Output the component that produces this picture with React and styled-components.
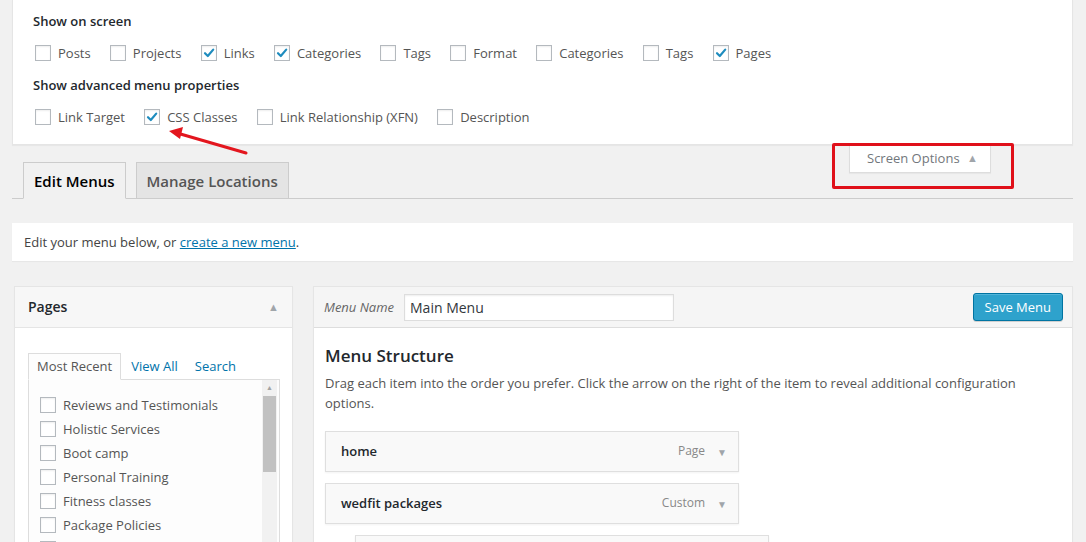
import styled, { createGlobalStyle } from "styled-components";

const GlobalStyle = createGlobalStyle`
  html, body {
    margin: 0;
    padding: 0;
    background: #f1f1f1;
  }
  body {
    font-family: "Open Sans", "Liberation Sans", sans-serif;
    font-size: 13px;
    line-height: 1.4;
    color: #444;
    overflow: hidden;
  }
  * {
    box-sizing: border-box;
  }
`;

const screenTypes = [
  { label: "Posts", checked: false },
  { label: "Projects", checked: false },
  { label: "Links", checked: true },
  { label: "Categories", checked: true },
  { label: "Tags", checked: false },
  { label: "Format", checked: false },
  { label: "Categories", checked: false },
  { label: "Tags", checked: false },
  { label: "Pages", checked: true },
];

const advanced = [
  { label: "Link Target", checked: false },
  { label: "CSS Classes", checked: true },
  { label: "Link Relationship (XFN)", checked: false },
  { label: "Description", checked: false },
];

// the last one is cut off by the bottom of the window, only its box shows
const pages = [
  "Reviews and Testimonials",
  "Holistic Services",
  "Boot camp",
  "Personal Training",
  "Fitness classes",
  "Package Policies",
  "",
];

const menuItems = [
  { title: "home", type: "Page", depth: 0 },
  { title: "wedfit packages", type: "Custom", depth: 0 },
  { title: "", type: "", depth: 1 },
];

function Checkbox({ checked }) {
  return (
    <Box>
      {checked && (
        <svg width="12" height="12" viewBox="0 0 12 12">
          <path
            d="M2 6.2 L4.8 9 L10.2 2.6"
            fill="none"
            stroke="#1e8cbe"
            strokeWidth="2.2"
            strokeLinecap="round"
            strokeLinejoin="round"
          />
        </svg>
      )}
    </Box>
  );
}

function App() {
  return (
    <>
      <GlobalStyle />
      <Page>
        <ScreenMeta>
          <Legend>Show on screen</Legend>
          <OptionRow>
            {screenTypes.map((o, i) => (
              <Option key={i}>
                <Checkbox checked={o.checked} />
                {o.label}
              </Option>
            ))}
          </OptionRow>
          <Legend>Show advanced menu properties</Legend>
          <OptionRow>
            {advanced.map((o, i) => (
              <Option key={i}>
                <Checkbox checked={o.checked} />
                {o.label}
              </Option>
            ))}
          </OptionRow>
          <Arrow width="90" height="34" viewBox="0 0 90 34">
            <line x1="83" y1="28" x2="14" y2="8" stroke="#e3161e" strokeWidth="3" strokeLinecap="round" />
            <polygon points="6,6 20,2 17,14" fill="#e3161e" />
          </Arrow>
        </ScreenMeta>

        <TabBar>
          <Tab $active>Edit Menus</Tab>
          <Tab>Manage Locations</Tab>
          <Spacer />
          <ScreenOptionsWrap>
            <ScreenOptions>
              Screen Options <Caret>▲</Caret>
            </ScreenOptions>
            <Highlight />
          </ScreenOptionsWrap>
        </TabBar>

        <Notice>
          Edit your menu below, or <Link href="#">create a new menu</Link>.
        </Notice>

        <Columns>
          <SidePanel>
            <PanelHead>
              <PanelTitle>Pages</PanelTitle>
              <Caret>▲</Caret>
            </PanelHead>
            <SideBody>
              <InnerTabs>
                <InnerTab $active>Most Recent</InnerTab>
                <InnerTab>View All</InnerTab>
                <InnerTab>Search</InnerTab>
              </InnerTabs>
              <ListBox>
                <PageList>
                  {pages.map((p, i) => (
                    <PageItem key={i}>
                      <Checkbox />
                      {p}
                    </PageItem>
                  ))}
                </PageList>
                <Scrollbar>
                  <ScrollArrow>▲</ScrollArrow>
                  <Thumb />
                </Scrollbar>
              </ListBox>
            </SideBody>
          </SidePanel>

          <MenuPanel>
            <MenuHead>
              <NameLabel>Menu Name</NameLabel>
              <NameInput defaultValue="Main Menu" />
              <Spacer />
              <SaveButton>Save Menu</SaveButton>
            </MenuHead>
            <MenuBody>
              <Heading>Menu Structure</Heading>
              <Description>
                Drag each item into the order you prefer. Click the arrow on the right of the item
                to reveal additional configuration options.
              </Description>
              <ItemList>
                {menuItems.map((m, i) => (
                  <MenuItem key={i} $depth={m.depth}>
                    <ItemTitle>{m.title}</ItemTitle>
                    {m.type && (
                      <>
                        <ItemType>{m.type}</ItemType>
                        <ItemCaret>▼</ItemCaret>
                      </>
                    )}
                  </MenuItem>
                ))}
              </ItemList>
            </MenuBody>
          </MenuPanel>
        </Columns>
      </Page>
    </>
  );
}

export default App;

const Page = styled.div`
  padding: 0 13px 0 12px;
  height: 542px;
`;

const ScreenMeta = styled.div`
  position: relative;
  background: #fff;
  border: 1px solid #e5e5e5;
  border-top: none;
  box-shadow: 0 1px 1px rgba(0, 0, 0, 0.04);
  padding: 12px 20px 18px 20px;
  display: flex;
  flex-direction: column;
  gap: 14px;
`;

const Legend = styled.div`
  font-weight: 600;
  color: #23282d;
  line-height: 18px;
`;

const OptionRow = styled.div`
  display: flex;
  height: 18px;
  align-items: center;
  padding-left: 2px;
`;

const Option = styled.label`
  display: flex;
  align-items: center;
  margin-right: 19.2px;
  color: #555;
  white-space: nowrap;
`;

const Box = styled.span`
  width: 16px;
  height: 16px;
  margin-right: 7px;
  border: 1px solid #b4b9be;
  background: #fff;
  box-shadow: inset 0 1px 2px rgba(0, 0, 0, 0.07);
  display: inline-flex;
  align-items: center;
  justify-content: center;
  flex-shrink: 0;
`;

const Arrow = styled.svg`
  position: absolute;
  left: 150px;
  top: 125px;
  z-index: 3;
  overflow: visible;
`;

const TabBar = styled.div`
  display: flex;
  align-items: flex-end;
  height: 54px;
  border-bottom: 1px solid #ccc;
  padding-left: 11px;
`;

const Tab = styled.div`
  margin-right: 10px;
  margin-bottom: -1px;
  padding: 5px 10px 5px 10px;
  height: 37px;
  font-size: 15px;
  line-height: 26px;
  font-weight: 600;
  border: 1px solid #ccc;
  border-bottom-color: ${(p) => (p.$active ? "#f1f1f1" : "#ccc")};
  background: ${(p) => (p.$active ? "#f1f1f1" : "#e4e4e4")};
  color: ${(p) => (p.$active ? "#000" : "#555")};
`;

const Spacer = styled.div`
  flex: 1;
`;

const ScreenOptionsWrap = styled.div`
  position: relative;
  align-self: flex-start;
  margin-right: 82px;
`;

const ScreenOptions = styled.div`
  width: 142px;
  height: 28px;
  background: #fff;
  border: 1px solid #ddd;
  border-top: none;
  box-shadow: 0 1px 1px rgba(0, 0, 0, 0.04);
  color: #72777c;
  line-height: 26px;
  padding-left: 17px;
`;

const Caret = styled.span`
  font-size: 11px;
  color: #a0a5aa;
  margin-left: 4px;
  vertical-align: 1px;
`;

const Highlight = styled.div`
  position: absolute;
  left: -17px;
  top: -2px;
  width: 182px;
  height: 46px;
  border: 3px solid #e0101a;
  border-radius: 2px;
  pointer-events: none;
`;

const Notice = styled.div`
  margin-top: 24px;
  background: #fff;
  height: 38px;
  line-height: 38px;
  padding: 0 12px;
  box-shadow: 0 1px 1px rgba(0, 0, 0, 0.04);
  color: #444;
`;

const Link = styled.a`
  color: #0073aa;
  text-decoration: underline;
`;

const Columns = styled.div`
  margin-top: 25px;
  display: flex;
  align-items: flex-start;
  gap: 20px;
  padding-left: 2px;
`;

const SidePanel = styled.div`
  width: 279px;
  flex-shrink: 0;
  background: #fff;
  border: 1px solid #e5e5e5;
  box-shadow: 0 1px 1px rgba(0, 0, 0, 0.04);
`;

const PanelHead = styled.div`
  display: flex;
  align-items: center;
  justify-content: space-between;
  height: 41px;
  padding: 0 13px 0 13px;
  background: #f7f7f7;
  border-bottom: 1px solid #e5e5e5;
`;

const PanelTitle = styled.div`
  font-size: 14px;
  font-weight: 600;
  color: #23282d;
`;

const SideBody = styled.div`
  padding: 25px 12px 0 13px;
`;

const InnerTabs = styled.div`
  display: flex;
  align-items: flex-end;
`;

const InnerTab = styled.div`
  height: 27px;
  line-height: 24px;
  padding: ${(p) => (p.$active ? "0 8px" : "0")};
  margin-right: ${(p) => (p.$active ? "9px" : "15px")};
  margin-bottom: -1px;
  position: relative;
  color: ${(p) => (p.$active ? "#555" : "#0073aa")};
  background: ${(p) => (p.$active ? "#fdfdfd" : "transparent")};
  border: 1px solid ${(p) => (p.$active ? "#ddd" : "transparent")};
  border-bottom-color: ${(p) => (p.$active ? "#fdfdfd" : "transparent")};
  z-index: 1;
`;

const ListBox = styled.div`
  display: flex;
  height: 200px;
  background: #fdfdfd;
  border: 1px solid #ddd;
  overflow: hidden;
`;

const PageList = styled.div`
  flex: 1;
  padding: 13px 11px 0 11px;
`;

const PageItem = styled.div`
  display: flex;
  align-items: center;
  height: 24px;
  color: #555;
  white-space: nowrap;
`;

const Scrollbar = styled.div`
  width: 15px;
  margin-right: 2px;
  background: #f1f1f1;
  display: flex;
  flex-direction: column;
  align-items: stretch;
`;

const ScrollArrow = styled.div`
  height: 16px;
  font-size: 7px;
  line-height: 16px;
  text-align: center;
  color: #a3a3a3;
`;

const Thumb = styled.div`
  height: 76px;
  background: #c1c1c1;
  margin: 0 1px;
`;

const MenuPanel = styled.div`
  flex: 1;
  background: #fff;
  border: 1px solid #e5e5e5;
  box-shadow: 0 1px 1px rgba(0, 0, 0, 0.04);
  height: 400px;
`;

const MenuHead = styled.div`
  display: flex;
  align-items: center;
  height: 41px;
  padding: 0 9px 0 10px;
  background: #f5f5f5;
  border-bottom: 1px solid #ddd;
`;

const NameLabel = styled.span`
  font-style: italic;
  color: #666;
  margin-right: 10px;
`;

const NameInput = styled.input`
  width: 270px;
  height: 27px;
  border: 1px solid #ddd;
  box-shadow: inset 0 1px 2px rgba(0, 0, 0, 0.07);
  background: #fff;
  font-family: "Open Sans", "Liberation Sans", sans-serif;
  font-size: 14px;
  color: #32373c;
  padding: 0 5px;
  outline: none;
`;

const SaveButton = styled.button`
  height: 28px;
  padding: 0 11px;
  background: #2ea2cc;
  border: 1px solid #0074a2;
  border-radius: 3px;
  box-shadow: inset 0 1px 0 rgba(120, 200, 230, 0.5), 0 1px 0 rgba(0, 0, 0, 0.15);
  color: #fff;
  font-family: "Open Sans", "Liberation Sans", sans-serif;
  font-size: 13px;
  font-weight: 400;
`;

const MenuBody = styled.div`
  padding: 16px 10px 0 11px;
`;

const Heading = styled.h3`
  margin: 0 0 5px 0;
  font-size: 17px;
  font-weight: 600;
  line-height: 24px;
  color: #23282d;
`;

const Description = styled.p`
  margin: 0;
  line-height: 20px;
  color: #555;
  max-width: 737px;
`;

const ItemList = styled.div`
  margin-top: 18px;
  display: flex;
  flex-direction: column;
  gap: 11px;
`;

const MenuItem = styled.div`
  display: flex;
  align-items: center;
  width: 414px;
  height: 41px;
  margin-left: ${(p) => p.$depth * 30}px;
  padding: 0 11px 0 15px;
  background: #f9f9f9;
  border: 1px solid #dfdfdf;
  box-shadow: 0 1px 2px rgba(0, 0, 0, 0.05);
`;

const ItemTitle = styled.span`
  flex: 1;
  font-weight: 600;
  color: #23282d;
`;

const ItemType = styled.span`
  color: #888;
  font-size: 12px;
  margin-right: 12px;
`;

const ItemCaret = styled.span`
  color: #a0a5aa;
  font-size: 10px;
`;
